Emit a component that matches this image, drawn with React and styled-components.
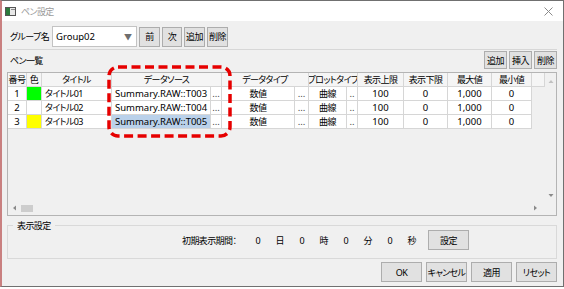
import React from "react";
import styled, { createGlobalStyle, css } from "styled-components";

const FONT = `"Noto Sans", "Noto Sans CJK JP", sans-serif`;

const jp = css`
  font-size: 9px;
  letter-spacing: -0.6px;
  white-space: nowrap;
`;

const GlobalStyle = createGlobalStyle`
  html, body { margin: 0; padding: 0; background: #ffffff; }
  body { font-family: ${FONT}; font-size: 9.5px; color: #000; }
  * { box-sizing: border-box; }
`;

const Window = styled.div`
  position: relative;
  width: 564px;
  height: 287px;
  border: 1px solid #707070;
  border-left: 2px solid #c98080;
  background: #f0f0f0;
  display: flex;
  flex-direction: column;
  font-feature-settings: "palt" 1;
`;

const TitleBar = styled.div`
  height: 20px;
  background: #ffffff;
  display: flex;
  align-items: center;
  padding: 0 10px 0 3px;
  gap: 5px;
`;

const TitleText = styled.span`
  ${jp};
  color: #9a9a9a;
  flex: 1;
`;

const Body = styled.div`
  flex: 1;
  display: flex;
  flex-direction: column;
  padding: 0 6px 0 5px;
`;

const Toolbar = styled.div`
  height: 29px;
  display: flex;
  align-items: center;
  padding: 3px 0 0 3px;
  border-bottom: 1px solid #d7d7d7;
`;

const FieldLabel = styled.span`
  ${jp};
  width: 42px;
`;

const Text = styled.span`
  ${jp};
`;

const Combo = styled.div`
  width: 85px;
  height: 21px;
  background: #fff;
  border: 1px solid #c3c3c3;
  display: flex;
  align-items: center;
  padding-left: 3px;
  margin-right: 2px;
`;

const ComboText = styled.span`
  flex: 1;
`;

const ComboArrow = styled.span`
  width: 16px;
  text-align: center;
  color: #6e6e6e;
  font-size: 8px;
`;

const Button = styled.button`
  width: ${(p) => p.$w || 41}px;
  height: ${(p) => p.$h || 20}px;
  margin: 0 0 0 ${(p) => p.$ml || 0}px;
  padding: 0;
  background: #e1e1e1;
  border: 1px solid #adadad;
  font-family: ${FONT};
  ${jp};
  font-feature-settings: "palt" 1;
  color: #000;
  display: flex;
  align-items: center;
  justify-content: center;
`;

const ButtonGroup = styled.div`
  display: flex;
  gap: ${(p) => p.$gap ?? 2}px;
`;

const SectionHeader = styled.div`
  height: 22px;
  display: flex;
  align-items: center;
  justify-content: space-between;
  padding: 1px 0 3px 3px;
`;

const GridFrame = styled.div`
  height: 144px;
  border: 1px solid #b4b4b4;
  display: flex;
  background: #f0f0f0;
`;

const GridMain = styled.div`
  flex: 1;
  display: flex;
  flex-direction: column;
`;

const Grid = styled.div`
  flex: 1;
  display: grid;
  grid-template-columns: 19px 15px 70px 99px 11px 73px 14px 38px 11px 46px 44px 44px 40px 1fr;
  grid-auto-rows: 14px;
  align-content: start;
`;

const HeadCell = styled.div`
  ${jp};
  grid-column: span ${(p) => p.$span || 1};
  background: #f5f5f5;
  border-right: 1px solid #d6d6d6;
  border-bottom: 1px solid #d6d6d6;
  display: flex;
  align-items: center;
  justify-content: center;
  overflow: hidden;
  line-height: 1;
`;

const Cell = styled.div`
  ${(p) => p.$jp && jp};
  background: ${(p) => p.$bg || "#ffffff"};
  border-right: 1px solid #d6d6d6;
  border-bottom: 1px solid #d6d6d6;
  display: flex;
  align-items: center;
  justify-content: ${(p) => (p.$left ? "flex-start" : "center")};
  padding-left: ${(p) => (p.$left ? 3 : 0)}px;
  white-space: nowrap;
  overflow: hidden;
  line-height: 1;
  color: ${(p) => (p.$dim ? "#444" : "#000")};
`;

const FillCell = styled.div``;

const HScroll = styled.div`
  height: 12px;
  display: flex;
  align-items: center;
  padding: 0 6px 0 4px;
  margin-bottom: 1px;
`;

const Thumb = styled.div`
  width: 12px;
  height: 7px;
  background: #cdcdcd;
  margin-left: 3px;
`;

const ScrollSpacer = styled.div`
  flex: 1;
`;

const VScroll = styled.div`
  width: 11px;
  display: flex;
  flex-direction: column;
  align-items: center;
  justify-content: space-between;
  padding: 6px 0 16px;
`;

const GroupBox = styled.fieldset`
  margin: 5px 0 0;
  padding: 0 0 3px;
  height: 38px;
  border: 1px solid #d9d9d9;
  display: flex;
  align-items: center;
`;

const Legend = styled.legend`
  ${jp};
  margin-left: 5px;
  padding: 0 4px;
  line-height: 1;
`;

const PeriodRow = styled.div`
  display: flex;
  align-items: center;
  padding-left: 174px;
  width: 100%;
`;

const PeriodLabel = styled.span`
  ${jp};
  width: 65px;
`;

const Unit = styled.span`
  ${jp};
  letter-spacing: 0;
  width: 22px;
  text-align: center;
`;

const Footer = styled.div`
  display: flex;
  justify-content: flex-end;
  gap: 4px;
  padding-top: 3px;
`;

const Highlight = styled.svg`
  position: absolute;
  left: 105px;
  top: 64px;
  pointer-events: none;
`;

const Arrow = ({ dir }) => {
  const pts = {
    up: "0.5,4 3,1 5.5,4",
    down: "0.5,1 3,4 5.5,1",
    left: "4,0.5 1,3 4,5.5",
    right: "1,0.5 4,3 1,5.5",
  }[dir];
  return (
    <svg width="6" height="6" viewBox="0 0 6 6">
      <polygon points={pts} fill={dir === "up" ? "#c0c0c0" : "#8a8a8a"} />
    </svg>
  );
};

const rows = [
  { no: 1, color: "#00ff00", title: "タイトル01", src: "Summary.RAW::T003" },
  { no: 2, color: "#ffffff", title: "タイトル02", src: "Summary.RAW::T004" },
  { no: 3, color: "#ffff00", title: "タイトル03", src: "Summary.RAW::T005", sel: true },
];

export default function App() {
  return (
    <>
      <GlobalStyle />
      <Window>
        <TitleBar>
          <svg width="11" height="9" viewBox="0 0 11 9">
            <rect x="0.5" y="0.5" width="10" height="8" fill="#e8e8e8" stroke="#555" />
            <rect x="1" y="1" width="4" height="7" fill="#2c7a3c" />
            <rect x="6" y="2" width="4" height="1" fill="#888" />
          </svg>
          <TitleText>ペン設定</TitleText>
          <svg width="9" height="9" viewBox="0 0 9 9">
            <path d="M0.5 0.5 L8.5 8.5 M8.5 0.5 L0.5 8.5" stroke="#8a8a8a" strokeWidth="1" />
          </svg>
        </TitleBar>
        <Body>
          <Toolbar>
            <FieldLabel>グループ名</FieldLabel>
            <Combo>
              <ComboText>Group02</ComboText>
              <ComboArrow>▼</ComboArrow>
            </Combo>
            <ButtonGroup>
              <Button $w={21}>前</Button>
              <Button $w={20}>次</Button>
              <Button $w={21}>追加</Button>
              <Button $w={21}>削除</Button>
            </ButtonGroup>
          </Toolbar>
          <SectionHeader>
            <Text>ペン一覧</Text>
            <ButtonGroup>
              <Button $w={23} $h={18}>追加</Button>
              <Button $w={23} $h={18}>挿入</Button>
              <Button $w={23} $h={18}>削除</Button>
            </ButtonGroup>
          </SectionHeader>
          <GridFrame>
            <GridMain>
              <Grid>
                <HeadCell>番号</HeadCell>
                <HeadCell>色</HeadCell>
                <HeadCell>タイトル</HeadCell>
                <HeadCell $span={2}>データソース</HeadCell>
                <HeadCell $span={2}>データタイプ</HeadCell>
                <HeadCell $span={2}>プロットタイプ</HeadCell>
                <HeadCell>表示上限</HeadCell>
                <HeadCell>表示下限</HeadCell>
                <HeadCell>最大値</HeadCell>
                <HeadCell>最小値</HeadCell>
                <HeadCell />
                {rows.map((r) => (
                  <React.Fragment key={r.no}>
                    <Cell>{r.no}</Cell>
                    <Cell $bg={r.color} />
                    <Cell $left $jp>{r.title}</Cell>
                    <Cell $left $bg={r.sel ? "#bad1ea" : undefined}>{r.src}</Cell>
                    <Cell $dim>...</Cell>
                    <Cell $jp>数値</Cell>
                    <Cell $dim>...</Cell>
                    <Cell $jp>曲線</Cell>
                    <Cell $dim>..</Cell>
                    <Cell>100</Cell>
                    <Cell>0</Cell>
                    <Cell>1,000</Cell>
                    <Cell>0</Cell>
                    <FillCell />
                  </React.Fragment>
                ))}
              </Grid>
              <HScroll>
                <Arrow dir="left" />
                <Thumb />
                <ScrollSpacer />
                <Arrow dir="right" />
              </HScroll>
            </GridMain>
            <VScroll>
              <Arrow dir="up" />
              <Arrow dir="down" />
            </VScroll>
          </GridFrame>
          <GroupBox>
            <Legend>表示設定</Legend>
            <PeriodRow>
              <PeriodLabel>初期表示期間：</PeriodLabel>
              <Unit>0</Unit>
              <Unit>日</Unit>
              <Unit>0</Unit>
              <Unit>時</Unit>
              <Unit>0</Unit>
              <Unit>分</Unit>
              <Unit>0</Unit>
              <Unit>秒</Unit>
              <Button $w={41} $ml={5}>設定</Button>
            </PeriodRow>
          </GroupBox>
          <Footer>
            <Button>OK</Button>
            <Button>キャンセル</Button>
            <Button>適用</Button>
            <Button>リセット</Button>
          </Footer>
        </Body>
        <Highlight width="126" height="74" viewBox="0 0 126 74">
          <rect x="2" y="2" width="121" height="69" rx="9" fill="none" stroke="#e60000" strokeWidth="3.5" strokeDasharray="9 4.5" />
        </Highlight>
      </Window>
    </>
  );
}
